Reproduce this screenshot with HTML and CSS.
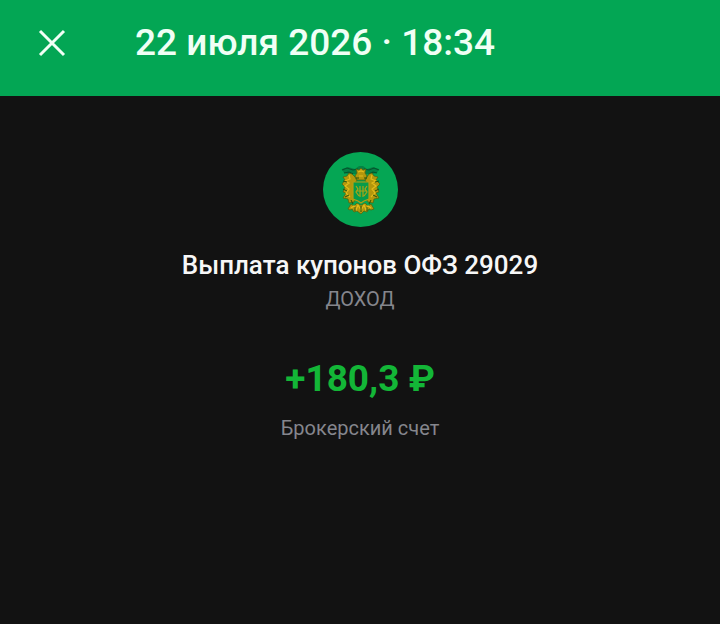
FILE: index.html
```html
<!DOCTYPE html>
<html lang="ru">
<head>
<meta charset="utf-8">
<meta name="viewport" content="width=device-width, initial-scale=1">
<title>Выплата купонов ОФЗ 29029</title>
<link rel="stylesheet" href="styles.css">
</head>
<body>
<header class="topbar">
  <button class="close" type="button" aria-label="Закрыть">
    <svg width="28" height="28" viewBox="0 0 28 28" aria-hidden="true"><path d="M2 2 26 26M26 2 2 26"/></svg>
  </button>
  <h1 class="date">22 июля 2026 · 18:34</h1>
</header>
<main class="operation">
  <svg class="emblem" viewBox="0 0 75 75" aria-hidden="true">
    <circle cx="37.5" cy="37.5" r="37.5" fill="#05a654"/>
    <path d="M19 17l6-2 7 2 4-3h4l4 3 6-2 6 2-2 4-5 1H26l-5-1z" fill="#058144"/>
    <path d="M19 18l5-2 6 2 5-1M41 17l5 1 5-2 5 2M21 21l5-1 4 2M46 22l4-2 4 1" fill="none" stroke="#04542c" stroke-width="1.100"/>
    <g fill="#b3970c" stroke="#4c620f" stroke-width=".7">
      <path d="M34 21l-1-4 3 1 2-2 2 2 3-1-1 4 2 3-2 4h-8l-2-4z"/>
      <path d="M29 22l-3-1-2 3-4 1 2 3-3 4 3 3-2 5 3 1-3 5 5 1 1 4 5-1 2-4-2-3V31l3-2-2-4z"/>
      <path d="M46 22l3-1 2 3 4 1-2 3 4 4-3 3 2 5-3 1 3 5-5 1-1 4-5-1-2-4 2-3V31l-3-2 2-4z"/>
      <path d="M25 57l3-5 3 2 3-3 3 2h2l3-2 3 3 3-2 3 5-3 1-2-1-2 3-3-1-3 3-4-3-3 1-2-3-2 1z"/>
    </g>
    <path d="M30 30h16v17l-5 2-3 2-3-2-5-2z" fill="#079b4a" stroke="#b49d14" stroke-width="1.200"/>
    <g fill="none" stroke="#aaa416" stroke-width="1.200">
      <path d="M33 34l2 3-2 3 3 4M37 34v11M40 34v11M44 34l-2 3 2 3-3 4M33 39h11"/>
    </g>
    <g fill="none" stroke="#e4bb1b" stroke-width="1.200">
      <path d="M26 23l1 4-5 2 4 2-4 3 4 3-3 4 4 4M49 23l-1 4 5 2-4 2 4 3-4 3 3 4-4 4M35 20l3-1 3 1M36 24h4M28 56l3-2 2 4 2-5 3 5 3-5 2 5 2-4 3 2"/>
    </g>
    <g fill="none" stroke="#26500e" stroke-width="1">
      <path d="M20 29l4 1M20 37l4 2M22 45l4-2M56 29l-4 1M56 37l-4 2M54 45l-4-2M28 48l2 4M38 54v6M48 48l-2 4M33 26h3M41 26h3M32 55v4M44 55v4"/>
    </g>
  </svg>
  <h2 class="name">Выплата купонов ОФЗ 29029</h2>
  <p class="note">ДОХОД</p>
  <p class="amount">+180,3 ₽</p>
  <p class="note">Брокерский счет</p>
</main>
</body>
</html>
```
FILE: styles.css
```css
* {
  box-sizing: border-box;
}

body {
  margin: 0;
  min-height: 100vh;
  background: #121212;
  color: #f7f7f7;
  font-family: Roboto, "Liberation Sans", sans-serif;
}

h1, h2, p {
  margin: 0;
}

.topbar {
  display: flex;
  align-items: center;
  gap: 55px;
  padding: 15px 24px 25px;
  background: #03a654;
}

.close {
  display: flex;
  align-items: center;
  justify-content: center;
  width: 56px;
  height: 56px;
  padding: 0;
  border: 0;
  background: none;
  cursor: pointer;
}

.close path {
  fill: none;
  stroke: #f0fff5;
  stroke-width: 3;
}

.date {
  color: #f0fff5;
  font-size: 37px;
  font-weight: 500;
  line-height: 48px;
}

.operation {
  display: flex;
  flex-direction: column;
  align-items: center;
  padding: 56px 24px;
  text-align: center;
}

.emblem {
  width: 75px;
  height: 75px;
}

.name {
  margin-top: 20px;
  font-size: 26px;
  font-weight: 500;
  line-height: 36px;
}

.note {
  color: #85868d;
  font-size: 20px;
  line-height: 32px;
}

.amount {
  margin: 40px 0 9px;
  color: #13b637;
  font-size: 37px;
  font-weight: 700;
  line-height: 48px;
}
```
